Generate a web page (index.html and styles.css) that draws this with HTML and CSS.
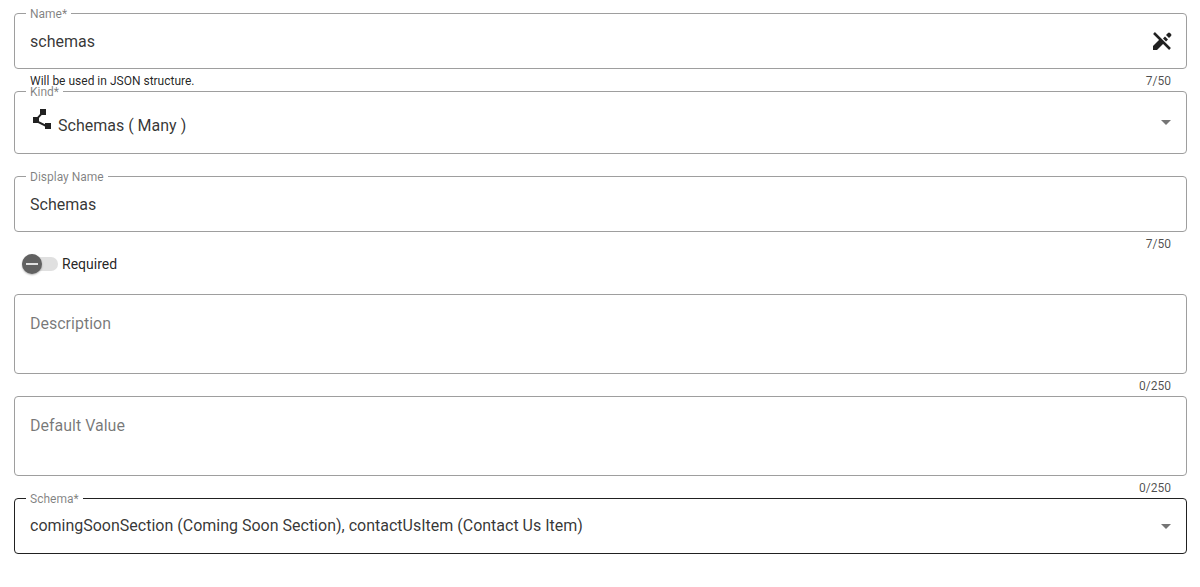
FILE: index.html
```html
<!DOCTYPE html>
<html lang="en">
<head>
<meta charset="utf-8">
<meta name="viewport" content="width=device-width, initial-scale=1">
<title>Schema field</title>
<link rel="stylesheet" href="styles.css">
</head>
<body>
<form class="form">
  <div class="field">
    <div class="box">
      <label class="label" for="name">Name*</label>
      <input class="control" id="name" type="text" value="schemas" maxlength="50" required>
      <button class="icon-button" type="button" aria-label="Edit name">
        <svg class="icon" viewBox="0 0 24 24" aria-hidden="true">
          <path d="M3 21v-4l7-7 4 4-7 7z"/>
          <path d="M13 9.500l2-2 3 3-2 2z"/>
          <path d="M16 6l2-2q1-1 2 0l1 1q1 1 0 2l-2 2z"/>
          <path d="M4 4l16 16" fill="none" stroke="currentColor" stroke-width="2.500"/>
        </svg>
      </button>
    </div>
    <div class="subscript"><span>Will be used in JSON structure.</span><span class="counter">7/50</span></div>
  </div>

  <div class="field">
    <div class="box box-kind">
      <label class="label" for="kind">Kind*</label>
      <svg class="icon icon-kind" viewBox="0 0 24 24" aria-hidden="true"><path d="M15 16v1.260l-6-3v-3.170L11.700 8H16V2h-6v4.900L7.300 10H3v6h5l7 3.500V22h6v-6z"/></svg>
      <select class="control" id="kind" required><option>Schemas ( Many )</option></select>
      <svg class="arrow" viewBox="0 0 10 5" aria-hidden="true"><path d="M0 0h10L5 5z"/></svg>
    </div>
    <div class="subscript"></div>
  </div>

  <div class="field">
    <div class="box">
      <label class="label" for="display-name">Display Name</label>
      <input class="control" id="display-name" type="text" value="Schemas" maxlength="50">
    </div>
    <div class="subscript"><span class="counter">7/50</span></div>
  </div>

  <div class="toggle">
    <input class="switch" id="required" type="checkbox" role="switch">
    <label for="required">Required</label>
  </div>

  <div class="field">
    <div class="box">
      <textarea class="control area" id="description" placeholder="Description" aria-label="Description" maxlength="250"></textarea>
    </div>
    <div class="subscript"><span class="counter">0/250</span></div>
  </div>

  <div class="field">
    <div class="box">
      <textarea class="control area" id="default-value" placeholder="Default Value" aria-label="Default Value" maxlength="250"></textarea>
    </div>
    <div class="subscript"><span class="counter">0/250</span></div>
  </div>

  <div class="field">
    <div class="box box-active">
      <label class="label" for="schema">Schema*</label>
      <select class="control" id="schema" required><option>comingSoonSection (Coming Soon Section), contactUsItem (Contact Us Item)</option></select>
      <svg class="arrow" viewBox="0 0 10 5" aria-hidden="true"><path d="M0 0h10L5 5z"/></svg>
    </div>
  </div>
</form>
</body>
</html>
```
FILE: styles.css
```css
* {
  box-sizing: border-box;
}

body {
  margin: 0;
  background: #fff;
  color: rgba(0, 0, 0, 0.87);
  font-family: Roboto, "Liberation Sans", sans-serif;
}

.form {
  display: flex;
  flex-direction: column;
  padding: 13px 13px 32px 14px;
}

.box {
  position: relative;
  display: flex;
  align-items: center;
  padding: 0 15px;
  border: 1px solid #9e9e9e;
  border-radius: 4px;
}

.box-active {
  border-color: #212121;
}

.label {
  position: absolute;
  top: -6px;
  left: 11px;
  padding: 0 4px;
  background: #fff;
  color: rgba(0, 0, 0, 0.5);
  font-size: 12px;
  line-height: 12px;
}

.control {
  flex: 1;
  min-width: 0;
  height: 54px;
  margin: 0;
  padding: 15px 0;
  border: 0;
  outline: 0;
  background: transparent;
  appearance: none;
  color: rgba(0, 0, 0, 0.8);
  font-family: inherit;
  font-size: 16px;
  line-height: 24px;
}

.control::placeholder {
  color: rgba(0, 0, 0, 0.54);
  opacity: 1;
}

.box-kind .control {
  height: 61px;
  padding: 22px 0 15px;
}

.area {
  display: block;
  height: 78px;
  padding: 17px 0;
  resize: none;
}

.icon {
  display: block;
  width: 24px;
  height: 24px;
  fill: currentColor;
}

.icon-kind {
  align-self: flex-start;
  margin: 15px 4px 0 0;
}

.icon-button {
  margin: 0 -3px 0 0;
  padding: 0;
  border: 0;
  background: transparent;
  color: #212121;
}

.arrow {
  width: 10px;
  height: 5px;
  fill: #757575;
  pointer-events: none;
}

.subscript {
  display: flex;
  height: 22px;
  padding: 0 16px;
  font-size: 12px;
  line-height: 24px;
}

.counter {
  margin-left: auto;
  color: rgba(0, 0, 0, 0.7);
}

.toggle {
  display: flex;
  align-items: center;
  gap: 4px;
  height: 20px;
  margin-bottom: 20px;
  padding-left: 8px;
  font-size: 14px;
  line-height: 20px;
}

.switch {
  display: flex;
  align-items: center;
  width: 36px;
  height: 14px;
  margin: 0;
  border-radius: 7px;
  background: #e0e0e0;
  appearance: none;
}

.switch::before {
  content: "";
  width: 20px;
  height: 20px;
  border-radius: 50%;
  background: linear-gradient(#e0e0e0, #e0e0e0) center / 12px 2px no-repeat, #616161;
  box-shadow: 0 1px 2px rgba(0, 0, 0, 0.3);
}

.switch:checked {
  justify-content: flex-end;
}
```
